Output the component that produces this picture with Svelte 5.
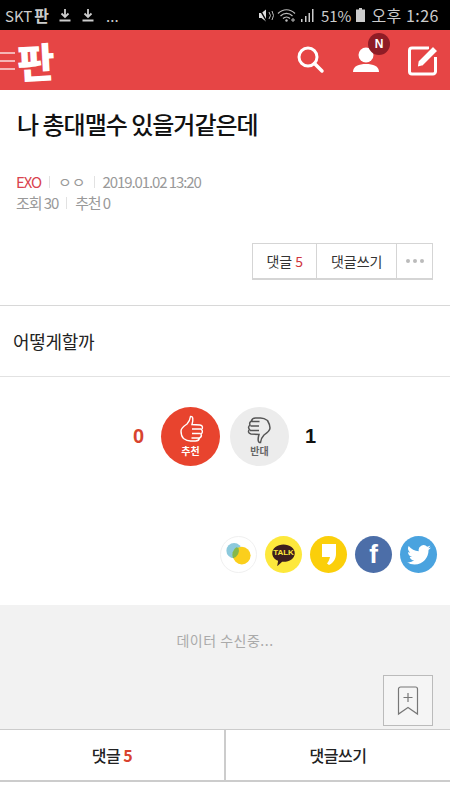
<script>
  let comments = 5;
  let title = '나 총대맬수 있을거같은데';
  let body = '어떻게할까';
</script>

<div class="page">
  <div class="status">
    <div class="status-left">
      <span>SKT</span>
      <span class="carrier">판</span>
      <svg width="14" height="14" viewBox="0 0 14 14"><path d="M7 1v7M3.500 5.500 7 9l3.500-3.500M1.500 12.500h11" fill="none" stroke="#ccc" stroke-width="1.800"/></svg>
      <svg width="14" height="14" viewBox="0 0 14 14"><path d="M7 1v7M3.500 5.500 7 9l3.500-3.500M1.500 12.500h11" fill="none" stroke="#ccc" stroke-width="1.800"/></svg>
      <span class="dots">...</span>
    </div>
    <div class="status-right">
      <svg width="17" height="15" viewBox="0 0 17 15"><path d="M1 5h2.500L8 1.500v12L3.500 10H1z" fill="#ddd"/><path d="M1.500 1 9 14" stroke="#000" stroke-width="1.500"/><path d="M11 4l1.500 3.500L11 11M14 3l1.500 4.500L14 12" fill="none" stroke="#bbb"/></svg>
      <svg class="wifi" width="21" height="15" viewBox="0 0 21 15"><path d="M1 5.500C6 .5 13 .5 18 5.500M3.500 8c3.500-3.500 8.500-3.500 12 0M6 10.500c2-2 5-2 7 0" fill="none" stroke="#bbb" stroke-width="1.200"/><circle cx="9.500" cy="12.500" r="1.200" fill="#bbb"/><path d="M16 10v4M14 12h4" stroke="#bbb"/></svg>
      <svg width="15" height="15" viewBox="0 0 15 15"><path d="M1 11h1.500v3H1zM5 8h1.500v6H5zM8.500 5H10v9H8.500zM12 1h1.500v13H12z" fill="#ccc"/></svg>
      <span class="pct">51%</span>
      <svg class="bat" width="9" height="14" viewBox="0 0 9 14"><path d="M3 0h3v1.500h3V14H0V1.500h3z" fill="#ccc"/></svg>
      <span class="time">오후 1:26</span>
    </div>
  </div>

  <header class="top">
    <div class="brand">
      <div class="burger"><i></i><i></i><i></i></div>
      <span class="logo">판</span>
    </div>
    <div class="actions">
      <svg width="28" height="28" viewBox="0 0 28 28"><circle cx="11" cy="11" r="9" fill="none" stroke="#fff" stroke-width="3"/><path d="M17.500 17.500 25 25" stroke="#fff" stroke-width="3.500" stroke-linecap="round"/></svg>
      <div class="user">
        <svg width="28" height="28" viewBox="0 0 28 28"><circle cx="14" cy="9" r="7.500" fill="#fff"/><path d="M1 26c0-6 6-8 13-8s13 2 13 8z" fill="#fff"/></svg>
        <span class="badge">N</span>
      </div>
      <svg width="32" height="32" viewBox="0 0 32 32"><path d="M22 4H5a2.500 2.500 0 0 0-2.500 2.500v21A2.500 2.500 0 0 0 5 30h21a2.500 2.500 0 0 0 2.500-2.500V13" fill="none" stroke="#fff" stroke-width="3"/><path d="M11 17 26 2l5 5-15 15-6 1.500z" fill="#fff" stroke="#e64545" stroke-width="1.500"/></svg>
    </div>
  </header>

  <section class="head">
    <h1>{title}</h1>
    <div class="meta">
      <span class="cat">EXO</span><b></b><span class="nick">ㅇㅇ</span><b></b><span>2019.01.02 13:20</span>
    </div>
    <div class="meta second">
      <span>조회 30</span><b></b><span>추천 0</span>
    </div>
    <div class="tools">
      <button>댓글 <em>{comments}</em></button>
      <button>댓글쓰기</button>
      <button class="more"><i></i><i></i><i></i></button>
    </div>
  </section>

  <div class="body">{body}</div>

  <div class="votes">
    <span class="count up">0</span>
    <div class="vote red">
      <svg width="30" height="30" viewBox="0 0 30 30"><path d="M5 16c0-3 3-5 6-7 2-2 3-4 3.500-7.500 2.500-.5 3 3 1.500 8l8 .500c3 .5 3 3 1.500 4.500 1.500 1.500 1 3.500-.5 4.500 1 2-.5 3.500-1.500 4-.5 2.500-2 3-4 3h-5c-3 0-5-1-7-2.500C6 22 5 19 5 16zM16 14h9M16 18.500h8.500M15.500 23h8" fill="none" stroke="#fff" stroke-width="1.400"/></svg>
      <span>추천</span>
    </div>
    <div class="vote grey">
      <svg width="30" height="30" viewBox="0 0 30 30"><path d="M25 13c0 3-3 5-6 7-2 2-3 4-3.500 7.500-2.500.5-3-3-1.500-8l-8-.5c-3-.5-3-3-1.500-4.500C3 13 3.500 11 5 10 4 8 5.500 6.500 6.500 6c.5-2.500 2-3 4-3h5c3 0 5 1 7 2.500C24 8 25 10 25 13zM14 15.500H5M14 11H5.500M14.500 6.500h-8" fill="none" stroke="#555" stroke-width="1.500"/></svg>
      <span>반대</span>
    </div>
    <span class="count down">1</span>
  </div>

  <div class="share">
    <div class="sns plain">
      <svg width="33" height="33" viewBox="0 0 30 30"><circle cx="11" cy="11.500" r="7" fill="#8cc9dc"/><circle cx="18" cy="16" r="8" fill="#fbcf1c"/><path d="M13 8.500a8 8 0 0 0-3 9.800A7 7 0 0 0 15 9z" fill="#86b84a"/></svg>
    </div>
    <div class="sns talk">
      <svg width="27" height="27" viewBox="0 0 30 30"><path d="M15 4c7 0 12.500 4 12.500 9.500S22 23 15 23h-1.500L8 28l1-6C5 20.500 2.500 17 2.500 13.500 2.500 8 8 4 15 4z" fill="#3c1e1e"/></svg>
      <span>TALK</span>
    </div>
    <div class="sns story">
      <svg width="16" height="23" viewBox="0 0 16 23"><path d="M1 1h14v10c0 5-3 9-7 11l-2-1.500c1.500-2 2.500-4 3-6.500H1z" fill="#fff"/></svg>
    </div>
    <div class="sns fb">f</div>
    <div class="sns tw">
      <svg width="24" height="22" viewBox="0 0 24 20"><path d="M24 2.400a10 10 0 0 1-2.800.8A5 5 0 0 0 23.300.5a10 10 0 0 1-3.100 1.200 4.900 4.900 0 0 0-8.400 4.500A14 14 0 0 1 1.700.9a4.900 4.900 0 0 0 1.500 6.600 5 5 0 0 1-2.200-.6c0 2.400 1.700 4.400 3.900 4.900a5 5 0 0 1-2.200.1 4.900 4.900 0 0 0 4.600 3.400A10 10 0 0 1 0 17.300 14 14 0 0 0 7.500 19.500c9.100 0 14-7.500 14-14v-.6A10 10 0 0 0 24 2.400z" fill="#fff"/></svg>
    </div>
  </div>

  <section class="loading">
    <p>데이터 수신중...</p>
    <button class="bookmark" aria-label="북마크">
      <svg width="22" height="30" viewBox="0 0 22 30"><path d="M1.500 28V3a2 2 0 0 1 2-2h15a2 2 0 0 1 2 2v25L11 21.500z" fill="none" stroke="#777" stroke-width="1.200"/><path d="M11 7v9M6.500 11.500h9" stroke="#777" stroke-width="1.200"/></svg>
    </button>
  </section>

  <nav class="bottom">
    <button>댓글 <em>{comments}</em></button>
    <button>댓글쓰기</button>
  </nav>
</div>

<style>
  :global(body) {
    margin: 0;
    background: #fff;
    font-family: "Noto Sans CJK KR", "Noto Sans", sans-serif;
  }

  .page {
    width: 450px;
    height: 800px;
    overflow: hidden;
    display: flex;
    flex-direction: column;
    color: #222;
  }

  .status {
    height: 30px;
    flex: none;
    background: #000;
    color: #ccc;
    font-size: 15px;
    display: flex;
    align-items: center;
    justify-content: space-between;
    padding: 0 11px 0 5px;
    font-family: "Noto Sans CJK KR", Roboto, sans-serif;
  }

  .status-left, .status-right {
    display: flex;
    align-items: center;
  }

  .status-left { gap: 9px; }
  .status-right { gap: 2px; }
  .pct { margin-left: 4px; }
  .bat { margin: 0 4px 0 3px; }

  .time {
    font-size: 16px;
    letter-spacing: .5px;
  }

  .carrier {
    margin-left: -7px;
    font-size: 16px;
    font-weight: 700;
  }

  .dots { margin-left: 2px; }

  .top {
    height: 60px;
    flex: none;
    background: #e64545;
    display: flex;
    align-items: center;
    justify-content: space-between;
    padding-right: 11px;
  }

  .brand {
    display: flex;
    align-items: center;
  }

  .burger {
    width: 15px;
    display: flex;
    flex-direction: column;
    gap: 6px;
    margin-top: 1px;
  }

  .burger i {
    height: 2px;
    background: #f5b5b5;
  }

  .logo {
    color: #fff;
    font-size: 41px;
    font-weight: 900;
    line-height: 1;
    margin-left: 2px;
    transform: rotate(-3deg);
  }

  .actions {
    display: flex;
    align-items: center;
    gap: 27px;
  }

  .user {
    position: relative;
    width: 28px;
    height: 28px;
  }

  .badge {
    position: absolute;
    top: -13px;
    right: -10px;
    width: 22px;
    height: 22px;
    border-radius: 50%;
    background: #8f1c26;
    color: #fff;
    font-family: "Liberation Sans", sans-serif;
    font-size: 12px;
    font-weight: 700;
    text-align: center;
    line-height: 22px;
  }

  .head {
    height: 216px;
    flex: none;
    box-sizing: border-box;
    padding: 16px 17px 0 16px;
    border-bottom: 1px solid #d8d8d8;
  }

  h1 {
    margin: 0 0 0 1px;
    font-size: 24px;
    line-height: 36px;
    font-weight: 500;
    letter-spacing: -1px;
    color: #111;
  }

  .meta {
    margin-top: 30px;
    display: flex;
    align-items: center;
    font-size: 15px;
    line-height: 19px;
    letter-spacing: -1.1px;
    color: #999;
  }

  .meta.second { margin-top: 2px; }

  .meta b {
    width: 1px;
    height: 12px;
    background: #e2e2e2;
    margin: 0 8px;
  }

  .cat { color: #d9434e; }
  .nick { letter-spacing: 0; }

  .tools {
    margin-top: 31px;
    display: flex;
    justify-content: flex-end;
  }

  .tools button {
    height: 37px;
    box-sizing: border-box;
    padding: 0 13.5px;
    margin-left: -1px;
    background: #fff;
    border: 1px solid #d5d5d5;
    border-bottom-width: 2px;
    font: inherit;
    font-size: 14px;
    color: #333;
    display: flex;
    align-items: center;
    justify-content: center;
    gap: 3px;
  }

  em {
    font-style: normal;
    color: #d0343c;
  }

  .tools .more {
    width: 37px;
    padding: 0;
    gap: 3px;
  }

  .more i {
    width: 4px;
    height: 4px;
    border-radius: 50%;
    background: #bbb;
  }

  .body {
    height: 71px;
    flex: none;
    box-sizing: border-box;
    padding: 0 13px;
    display: flex;
    align-items: center;
    border-bottom: 1px solid #e2e2e2;
    font-size: 18px;
    letter-spacing: -.3px;
    color: #222;
  }

  .votes {
    margin-top: 28px;
    height: 62px;
    flex: none;
    display: flex;
    align-items: center;
    justify-content: center;
    gap: 10px;
  }

  .vote {
    width: 59px;
    height: 59px;
    border-radius: 50%;
    display: flex;
    flex-direction: column;
    align-items: center;
    justify-content: center;
    font-size: 10px;
    font-weight: 700;
    line-height: 12px;
    padding-bottom: 1px;
    box-sizing: border-box;
  }

  .vote.red { background: #e8442e; color: #fff; }
  .vote.grey { background: #ececec; color: #666; }

  .count {
    font-family: "Liberation Sans", sans-serif;
    font-size: 20px;
    font-weight: 700;
    width: 18px;
  }

  .count.up { color: #d8432f; text-align: right; margin: 0 7px 0 -7px; }
  .count.down { color: #111; margin-left: 6px; margin-right: -6px; }

  .share {
    height: 38px;
    flex: none;
    margin-top: 69px;
    padding-right: 13px;
    display: flex;
    justify-content: flex-end;
    gap: 8px;
  }

  .sns {
    width: 37px;
    height: 37px;
    border-radius: 50%;
    display: flex;
    align-items: center;
    justify-content: center;
    position: relative;
    overflow: hidden;
  }

  .plain { border: 1px solid #f0f0f0; box-sizing: border-box; }
  .talk { background: #fde83c; }
  .talk span {
    position: absolute;
    top: 12px;
    font-family: "Liberation Sans", sans-serif;
    font-size: 8px;
    font-weight: 700;
    color: #fde83c;
  }
  .story { background: #fbcf0a; }
  .fb {
    background: #4c6ea8;
    color: #fff;
    font-family: "Liberation Sans", sans-serif;
    font-size: 26px;
    font-weight: 700;
  }
  .tw { background: #4aa3df; }

  .loading {
    flex: 1;
    margin-top: 31px;
    background: #f2f2f2;
    position: relative;
  }

  .loading p {
    margin: 25px 0 0;
    text-align: center;
    font-size: 14px;
    letter-spacing: .5px;
    color: #aaa;
  }

  .bookmark {
    position: absolute;
    right: 17px;
    bottom: 3px;
    width: 50px;
    height: 51px;
    padding: 0;
    background: #f5f5f5;
    border: 1px solid #bbb;
    display: flex;
    align-items: center;
    justify-content: center;
  }

  .bottom {
    height: 53px;
    flex: none;
    margin-bottom: 18px;
    display: flex;
    border-top: 1px solid #ccc;
    border-bottom: 2px solid #ccc;
    box-sizing: border-box;
  }

  .bottom button {
    flex: 1;
    background: #fff;
    border: 0;
    font: inherit;
    font-size: 16px;
    font-weight: 500;
    letter-spacing: -.5px;
    color: #222;
  }

  .bottom button + button { border-left: 2px solid #ccc; }
  .bottom em { font-weight: 700; color: #d8432f; }
</style>
